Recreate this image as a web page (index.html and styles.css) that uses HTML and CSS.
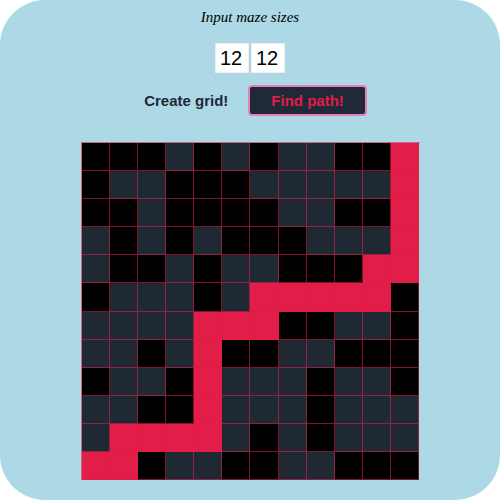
FILE: index.html
```html
<!DOCTYPE html>
<html lang="en">
<head>
  <meta charset="UTF-8">
  <title>Maze</title>
  <link rel="stylesheet" href="styles.css">
</head>
<body>
  <div class="app">
    <p class="title">Input maze sizes</p>
    <div class="sizes">
      <input type="number" class="size" value="12">
      <input type="number" class="size" value="12">
    </div>
    <div class="actions">
      <button class="btn-plain">Create grid!</button>
      <button class="btn-find">Find path!</button>
    </div>
    <div id="maze" class="maze"></div>
  </div>

  <script>
    // B = wall, D = open, R = path
    const rows = [
      'BBBDBDBDDBBR',
      'BDDBBBDDDDDR',
      'BBDBBBBDDBBR',
      'DBDBDBBBDDDR',
      'DBBDBDDBBBRR',
      'BDDDBDRRRRRB',
      'DDDDRRRBBDDB',
      'DDBDRBBDDBBB',
      'BDDBRDDDBDDB',
      'DDBBRDDDBDDD',
      'DRRRRDBDBDDD',
      'RRBDDBBDDBBB'
    ];
    const names = { B: 'wall', D: 'open', R: 'path' };
    const maze = document.getElementById('maze');

    rows.forEach(function(row) {
      row.split('').forEach(function(c) {
        const cell = document.createElement('div');
        cell.className = 'cell ' + names[c];
        maze.appendChild(cell);
      });
    });
  </script>
</body>
</html>
```

FILE: styles.css
```css
html, body { margin: 0; background: #fff; }
.app { box-sizing: border-box; height: 500px; background: #add8e6; border-radius: 45px; padding-top: 9px; display: flex; flex-direction: column; align-items: center; }
.title { margin: 0; font-family: "Liberation Serif", serif; font-style: italic; font-size: 15px; line-height: 17px; }
.sizes { display: flex; gap: 2px; margin-top: 17px; }
.size { box-sizing: border-box; width: 34px; height: 30px; padding: 0 4px; border: 1px solid #eee; background: #fff; font-family: "Liberation Sans", Arial, sans-serif; font-size: 20px; color: #000; outline: none; -moz-appearance: textfield; }
.size::-webkit-inner-spin-button, .size::-webkit-outer-spin-button { -webkit-appearance: none; margin: 0; }
.actions { display: flex; align-items: center; gap: 9px; margin-top: 12px; }
.btn-plain, .btn-find { font-family: "Liberation Sans", Arial, sans-serif; font-weight: 700; font-size: 15px; line-height: 19px; cursor: pointer; }
.btn-plain { background: none; border: none; padding: 4px 11px; color: #1f2937; }
.btn-find { background: #1f2937; color: #e11d48; border: 2px solid #e77fb8; border-radius: 4px; padding: 4px 21px; }
.maze { box-sizing: border-box; width: 339px; height: 338px; margin-top: 26px; display: grid; grid-template-columns: repeat(12, 1fr); grid-template-rows: repeat(12, 1fr); border-top: 1px solid rgba(225, 29, 72, 0.6); border-left: 1px solid rgba(225, 29, 72, 0.6); }
.cell { border-right: 1px solid rgba(225, 29, 72, 0.6); border-bottom: 1px solid rgba(225, 29, 72, 0.6); }
.wall { background: #000; }
.open { background: #1f2933; }
.path { background: #e11d48; }
```
